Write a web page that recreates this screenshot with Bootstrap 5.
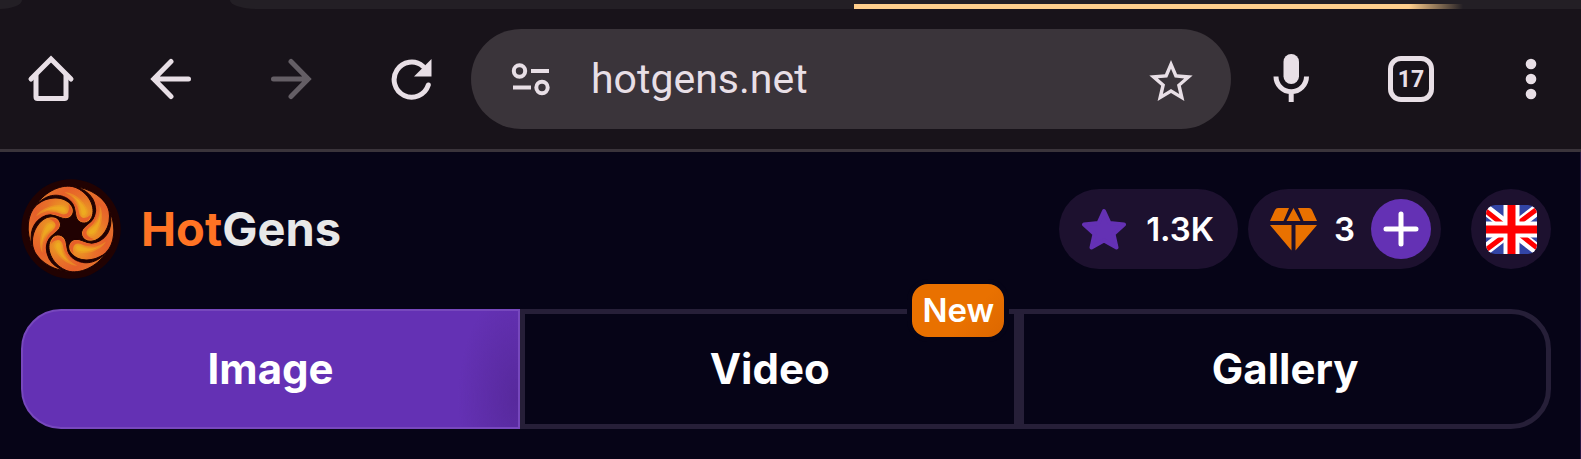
<!DOCTYPE html>
<html lang="en">
<head>
<meta charset="utf-8">
<meta name="viewport" content="width=device-width, initial-scale=1">
<title>HotGens</title>
<link href="https://cdn.jsdelivr.net/npm/bootstrap@5.3.0/dist/css/bootstrap.min.css" rel="stylesheet">
<style>
  :root { --ink: #e8dfe6; --chrome: #18131a; --line: #3a343b; --page: #060417; --violet: #6431b4; --orange: #e97100; --edge: #261f38; --chip: #1d112f; }
  body { background: var(--page); font-family: Inter, "Liberation Sans", sans-serif; color: #fff; overflow-x: hidden; }
  .btn { --bs-btn-border-width: 0; --bs-btn-padding-x: 0; --bs-btn-padding-y: 0; }
  svg { display: block; flex: none; }

  /* browser chrome */
  .browser { background: var(--chrome); border-bottom: 3px solid var(--line); }
  .tabstrip { height: 9px; background: var(--chrome); }
  .tab-prev { width: 22px; background: #231f25; border-bottom-right-radius: 22px 9px; }
  .tab-gap { width: 208px; }
  .tab-next { background: #231f25; border-bottom-left-radius: 26px 9px; }
  .loading { left: 54%; right: 118px; bottom: 0; height: 5px; background: linear-gradient(90deg, #ffce8c calc(100% - 54px), transparent); }
  .toolbar { padding: 20px 10px 20px 11px; gap: 20px; }
  .tool-group { gap: 40px; }
  .tool { width: 80px; height: 80px; color: var(--ink); }
  .tool:hover { color: #fff; }
  .tool:disabled { color: #645e65; opacity: 1; border: 0; }
  .omnibox { height: 100px; background: #3a343a; padding: 0 34px 0 40px; color: var(--ink); }
  .omnibox input { background: none; border: 0; outline: 0; color: inherit; font: 400 41px/56px Roboto, sans-serif; min-width: 0; margin-left: 40px; padding: 0; }
  .tabcount { width: 46px; height: 46px; border: 5px solid; border-radius: 13px; font: 700 23px/1 Roboto, sans-serif; }

  /* site */
  .site { padding: 27px 29px 30px 21px; border-right: 1px solid #24143f; }
  .brand { gap: 20px; font-size: 47px; line-height: 60px; font-weight: 700; color: #e8e8e8; text-decoration: none; }
  .brand b { font-weight: 700; color: #ff7324; }
  .chips { gap: 10px; }
  .chip { height: 80px; background: var(--chip); border-radius: 40px; font-size: 33px; line-height: 40px; font-weight: 600; }
  .chip-star { padding: 0 24px 0 23px; gap: 20px; }
  .chip-gem { padding: 0 10px 0 21px; gap: 16px; }
  .plus { width: 60px; height: 60px; background: var(--violet); }
  .lang { width: 80px; height: 80px; background: var(--chip); margin-left: 20px; }
  .switcher { margin-top: 30px; }
  .mode { height: 120px; flex: 15 1 0; border: 5px solid var(--edge); border-radius: 0; color: #fff; font-size: 42px; line-height: 56px; font-weight: 700; }
  .mode:hover { color: #fff; border-color: var(--edge); }
  .mode:first-child { padding: 3px; border: 2px solid #7748bd; border-radius: 40px 0 0 40px; background: radial-gradient(60px 110px at 100% 75%, #57299c, transparent), var(--violet); }
  .mode:last-child { flex-grow: 16; border-radius: 0 40px 40px 0; }
  .flag-new { top: -30px; right: 10px; padding: 6px 10px 7px; background: linear-gradient(135deg, var(--orange) 60%, #dc6700); border-radius: 16px; box-shadow: 0 0 0 5px var(--page); font-size: 33px; line-height: 40px; font-weight: 600; }
</style>
</head>
<body>
<header class="browser">
  <div class="tabstrip d-flex position-relative">
    <div class="tab-prev"></div><div class="tab-gap"></div><div class="tab-next flex-grow-1"></div>
    <div class="loading position-absolute"></div>
  </div>
  <nav class="toolbar d-flex align-items-center" aria-label="Browser">
    <div class="tool-group d-flex">
      <button class="btn tool d-flex align-items-center justify-content-center" aria-label="Home">
        <svg width="48" height="48" viewBox="0 0 48 48" fill="none" stroke="currentColor" stroke-width="5" stroke-linecap="round" stroke-linejoin="round"><path stroke-linejoin="miter" d="M4 24 24 4 44 24"/><path d="M9 20V42a1.500 1.500 0 0 0 1.500 1.500H37.500A1.500 1.500 0 0 0 39 42V20"/></svg>
      </button>
      <button class="btn tool d-flex align-items-center justify-content-center" aria-label="Back">
        <svg width="42" height="42" viewBox="0 0 42 42" fill="none" stroke="currentColor" stroke-width="5" stroke-linecap="round"><path d="M21 3.500 3.800 21 21 38.500M5 21H38.500"/></svg>
      </button>
      <button class="btn tool d-flex align-items-center justify-content-center" aria-label="Forward" disabled>
        <svg width="42" height="42" viewBox="0 0 42 42" fill="none" stroke="currentColor" stroke-width="5" stroke-linecap="round"><path d="M21 3.500 38.200 21 21 38.500M37 21H3.500"/></svg>
      </button>
      <button class="btn tool d-flex align-items-center justify-content-center" aria-label="Reload">
        <svg width="42" height="42" viewBox="0 0 42 42" fill="none" stroke="currentColor" stroke-width="5" stroke-linecap="round"><path d="M38.300 27A17.500 17.500 0 1 1 33 8.300"/><path d="M41.500 1V18.500H24Z" fill="currentColor" stroke="none"/></svg>
      </button>
    </div>
    <div class="omnibox rounded-pill d-flex align-items-center flex-grow-1">
      <button class="btn text-reset" aria-label="Site information">
        <svg width="40" height="34" viewBox="0 0 40 34" fill="none" stroke="currentColor" stroke-width="4"><circle cx="8.500" cy="9" r="5.700"/><path d="M20 9H38M2 25.500H20"/><circle cx="31" cy="25.500" r="5.700"/></svg>
      </button>
      <input class="flex-grow-1" type="text" value="hotgens.net" aria-label="Address" spellcheck="false">
      <button class="btn text-reset" aria-label="Bookmark">
        <svg width="52" height="52" viewBox="0 -1.200 24 24" fill="currentColor"><path d="M22 9.240l-7.190-.62L12 2 9.190 8.630 2 9.240l5.460 4.730L5.820 21 12 17.270 18.180 21l-1.630-7.030L22 9.240zM12 15.400l-3.760 2.270 1-4.280-3.320-2.880 4.380-.38L12 6.100l1.710 4.040 4.380.38-3.320 2.880 1 4.280L12 15.400z"/></svg>
      </button>
    </div>
    <div class="tool-group d-flex">
      <button class="btn tool d-flex align-items-center justify-content-center" aria-label="Voice search">
        <svg width="40" height="50" viewBox="0 0 40 50"><rect x="12.500" y="0" width="15.500" height="30" rx="7.700" fill="currentColor"/><path d="M5 22.500a15.200 15.200 0 0 0 30.500 0M20.200 37V48" fill="none" stroke="currentColor" stroke-width="5"/></svg>
      </button>
      <button class="btn tool d-flex align-items-center justify-content-center" aria-label="Open tabs">
        <span class="tabcount d-flex align-items-center justify-content-center">17</span>
      </button>
      <button class="btn tool d-flex align-items-center justify-content-center" aria-label="Menu">
        <svg width="12" height="40" viewBox="0 0 12 40" fill="currentColor" overflow="visible"><circle cx="6" cy="5" r="5.300"/><circle cx="6" cy="20" r="5.300"/><circle cx="6" cy="35" r="5.300"/></svg>
      </button>
    </div>
  </nav>
</header>

<main class="site">
  <div class="d-flex align-items-center justify-content-between">
    <a class="brand d-flex align-items-center" href="#">
      <svg width="100" height="100" viewBox="-150 -150 300 300" aria-hidden="true">
        <defs>
          <radialGradient id="flame" gradientUnits="userSpaceOnUse" cx="38" cy="-52" r="165">
            <stop offset="0" stop-color="#eca222"/><stop offset=".12" stop-color="#ea8a25"/><stop offset=".28" stop-color="#e87029"/><stop offset=".5" stop-color="#e6602a"/><stop offset=".72" stop-color="#e4702a"/><stop offset="1" stop-color="#dd9024"/>
          </radialGradient>
          <g id="petal">
            <path d="M-107-70C-75-116-25-136 10-126C54-110 76-64 62-34C52-13 28-13 18-30C9-50 18-73-11-92C-40-108-75-105-107-70Z" fill="url(#flame)" stroke="#210202" stroke-width="3"/>
            <path d="M18-38C12-58 18-76-12-94C-22-99-30-101-40-102C-15-100 20-86 24-50C28-26 48-30 60-44C56-16 26-14 18-38Z" fill="#e5502b" opacity=".7"/>
            <path d="M-20-110C4-110 30-92 42-72C50-58 54-50 46-38C38-30 30-34 29-44C27-72 10-98-20-110Z" fill="#eda621" opacity=".5"/>
            <path d="M2-100C18-94 32-80 40-66C46-54 46-48 42-42C36-38 32-42 32-48C28-74 18-90 2-100Z" fill="#efb01f" opacity=".6"/>
          </g>
        </defs>
        <circle r="149" fill="#210202"/>
        <use href="#petal"/><use href="#petal" transform="rotate(60)"/><use href="#petal" transform="rotate(120)"/><use href="#petal" transform="rotate(180)"/><use href="#petal" transform="rotate(240)"/><use href="#petal" transform="rotate(300)"/>
      </svg>
      <span><b>Hot</b>Gens</span>
    </a>
    <div class="chips d-flex align-items-center">
      <div class="chip chip-star d-flex align-items-center">
        <svg width="44" height="42" viewBox="0 0 44 42" fill="#6431b4" stroke="#6431b4" stroke-width="4" stroke-linejoin="round"><path d="M22 3 27.500 15 42 16.500 31.500 26 34.500 39.500 22 32.500 9.500 39.500 12.500 26 2 16.500 16.500 15Z"/></svg>
        <span>1.3K</span>
      </div>
      <div class="chip chip-gem d-flex align-items-center">
        <svg width="49" height="44" viewBox="0 0 49 44" fill="#e97100"><path d="M9 1H20L14.500 14H1L6 3Q7 1 9 1ZM40 1H29L34.500 14H48L43 3Q42 1 40 1ZM24.500 1 31.500 14H17.500ZM1 18H22.500V43.500ZM48 18H26.500V43.500Z"/></svg>
        <span>3</span>
        <button class="btn plus rounded-circle d-flex align-items-center justify-content-center" aria-label="Add gems">
          <svg width="36" height="36" viewBox="0 0 36 36" fill="none" stroke="#fff" stroke-width="5" stroke-linecap="round"><path d="M18 3V33M3 18H33"/></svg>
        </button>
      </div>
      <button class="btn lang rounded-circle d-flex align-items-center justify-content-center" aria-label="Language: English">
        <svg width="51" height="49" viewBox="0 0 51 49">
          <clipPath id="round"><rect width="51" height="49" rx="9"/></clipPath>
          <g clip-path="url(#round)">
            <rect width="51" height="49" fill="#3245a5"/>
            <path d="M-6 0 57 49M57 0-6 49" stroke="#fff" stroke-width="11"/>
            <path d="M-4 3 25 26M55 46 26 23M55 1 26 23M-4 48 25 26" stroke="#f00" stroke-width="5"/>
            <path d="M25.500 0V49M0 24.500H51" stroke="#fff" stroke-width="16"/>
            <path d="M25.500 0V49M0 24.500H51" stroke="#f00" stroke-width="8"/>
          </g>
        </svg>
      </button>
    </div>
  </div>

  <div class="switcher d-flex">
    <button class="btn mode">Image</button>
    <button class="btn mode position-relative">Video<span class="flag-new position-absolute">New</span></button>
    <button class="btn mode">Gallery</button>
  </div>
</main>
<script src="https://cdn.jsdelivr.net/npm/bootstrap@5.3.0/dist/js/bootstrap.bundle.min.js"></script>
</body>
</html>
